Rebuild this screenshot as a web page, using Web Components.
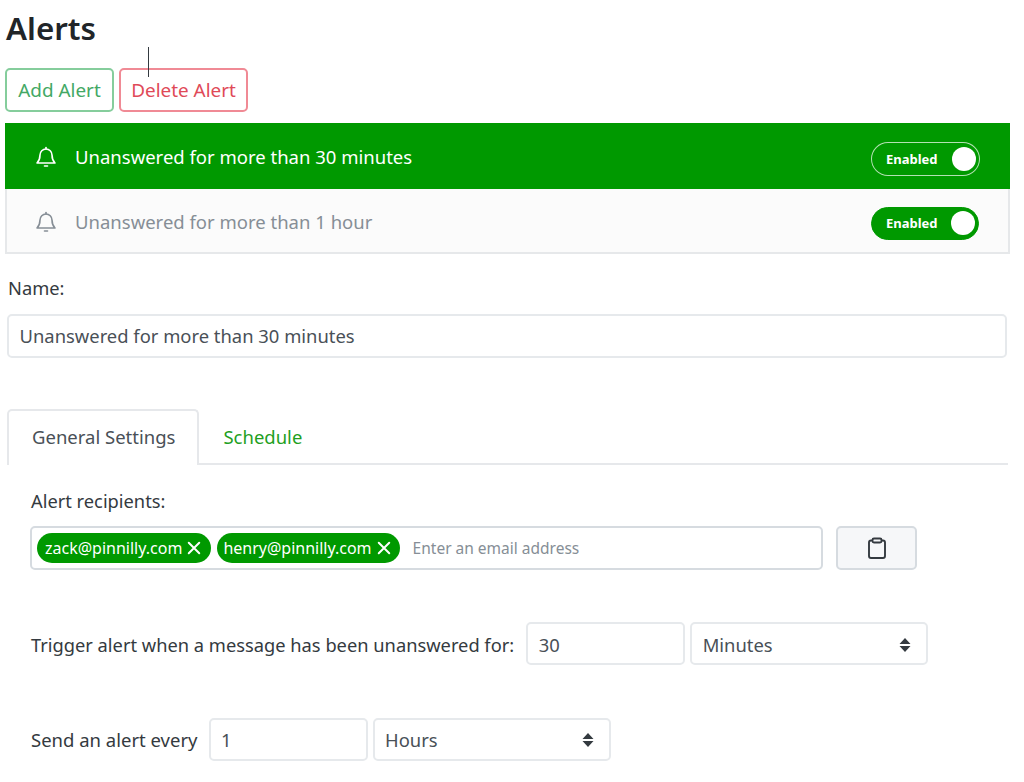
<!DOCTYPE html>
<html lang="en">
<head>
<meta charset="utf-8">
<title>Alerts</title>
<style>
    html, body { margin: 0; background: #fff; }
    body { font-family: 'Noto Sans', 'Open Sans', sans-serif; color: #343a40; overflow: hidden; height: 782px; }
</style>
</head>
<body>
<alerts-page></alerts-page>
<script>
(() => {
    const BELL = `<svg viewBox="0 0 24 24" width="24" height="24" fill="none" stroke="currentColor" stroke-width="1.6" stroke-linecap="round" stroke-linejoin="round">
        <path d="M6 10a6 6 0 0 1 12 0c0 5 1.500 6.500 3 8H3c1.500-1.500 3-3 3-8z"/><path d="M10.500 21h3"/><path d="M12 2.500v1.500"/></svg>`;

    class AlertButton extends HTMLElement {
        constructor() {
            super();
            this.attachShadow({ mode: 'open' }).innerHTML = `
                <style>
                    :host {
                        display: inline-flex;
                        align-items: center;
                        justify-content: center;
                        height: 44px;
                        box-sizing: border-box;
                        border: 2px solid var(--tone);
                        border-radius: 5px;
                        font-size: 18.9px;
                        color: var(--text);
                    }
                </style>
                <slot></slot>`;
        }
    }
    customElements.define('alert-button', AlertButton);

    class AlertToggle extends HTMLElement {
        constructor() {
            super();
            this.attachShadow({ mode: 'open' }).innerHTML = `
                <style>
                    :host {
                        display: flex;
                        align-items: center;
                        justify-content: space-between;
                        box-sizing: border-box;
                        width: 108px;
                        height: 33px;
                        padding: 0 3px 0 14px;
                        border: 1px solid var(--ring, #009900);
                        border-radius: 17px;
                        background: var(--fill, #009900);
                        color: #fff;
                        font-size: 13px;
                        font-weight: 700;
                    }
                    i { width: 24px; height: 24px; border-radius: 50%; background: #fff; }
                </style>
                <slot></slot><i></i>`;
        }
    }
    customElements.define('alert-toggle', AlertToggle);

    class AlertRow extends HTMLElement {
        constructor() {
            super();
            this.attachShadow({ mode: 'open' }).innerHTML = `
                <style>
                    :host {
                        display: flex;
                        align-items: center;
                        box-sizing: border-box;
                        font-size: 18.5px;
                    }
                    :host([active]) { height: 66px; padding: 0 30px 0 29px; background: #009900; color: #fff; }
                    :host(:not([active])) {
                        height: 65px;
                        background: #fbfbfb;
                        color: #868e96;
                        border: solid #e6e8ea;
                        border-width: 0 2px 2px;
                        padding: 0 29px 0 27px;
                    }
                    :host(:not([active])) .label { margin-top: 2px; }
                    .bell { display: flex; margin: 2px 17px 0 0; }
                    .label { flex: 1; }
                    alert-toggle { margin-top: 5px; }
                    :host([active]) alert-toggle { --ring: rgba(255,255,255,.7); width: 109px; height: 34px; }
                </style>
                <span class="bell">${BELL}</span>
                <span class="label"><slot></slot></span>
                <alert-toggle>Enabled</alert-toggle>`;
        }
    }
    customElements.define('alert-row', AlertRow);

    class EmailTag extends HTMLElement {
        constructor() {
            super();
            this.attachShadow({ mode: 'open' }).innerHTML = `
                <style>
                    :host {
                        display: inline-flex;
                        align-items: center;
                        height: 30px;
                        padding: 0 10px 0 8px;
                        border-radius: 15px;
                        background: #009900;
                        color: #fff;
                        font-size: 16px;
                    }
                    svg { margin-left: 5px; }
                </style>
                <slot></slot>
                <svg viewBox="0 0 12 12" width="14" height="14" fill="none" stroke="#fff" stroke-width="1.700" stroke-linecap="round"><path d="M1.500 1.500l9 9M10.500 1.500l-9 9"/></svg>`;
        }
    }
    customElements.define('email-tag', EmailTag);

    class FieldBox extends HTMLElement {
        constructor() {
            super();
            this.attachShadow({ mode: 'open' }).innerHTML = `
                <style>
                    :host {
                        display: flex;
                        align-items: center;
                        box-sizing: border-box;
                        height: 43px;
                        padding: 0 11px 0 10.5px;
                        border: 2px solid #e6e9ec;
                        border-radius: 5px;
                        font-size: 18.4px;
                        color: #495057;
                        background: #fff;
                    }
                    .val { flex: 1; }
                    svg { display: none; }
                    :host([select]) svg { display: block; margin-right: 3px; }
                </style>
                <span class="val"><slot></slot></span>
                <svg viewBox="0 0 14 16" width="14" height="16" fill="#343a40"><path d="M7 1l5.500 6h-11zM7 15l5.500-6h-11z"/></svg>`;
        }
    }
    customElements.define('field-box', FieldBox);

    class AlertsPage extends HTMLElement {
        constructor() {
            super();
            this.attachShadow({ mode: 'open' }).innerHTML = `
                <style>
                    :host { display: block; position: relative; height: 782px; }
                    h1 { margin: 0; padding: 6px 0 0 6px; font-size: 31.3px; line-height: 44px; font-weight: 600; color: #212529; }
                    .cursor { position: absolute; left: 148px; top: 47px; width: 1px; height: 30px; background: #343a40; }
                    .actions { display: flex; gap: 5px; padding: 18px 0 0 5px; }
                    .add { --tone: #85cd9c; --text: #43a865; width: 109px; }
                    .del { --tone: #f08a95; --text: #df4a58; width: 129px; }
                    .list { margin: 11px 14px 0 5px; }
                    .name-label { margin: 22px 0 0 8px; font-size: 18.3px; line-height: 24px; }
                    .name-field { margin: 14px 17px 0 7px; height: 44px; padding-bottom: 2px; }
                    .tabs { display: flex; margin: 51px 16px 0 7px; height: 56px; border-bottom: 2px solid #e6e8eb; box-sizing: border-box; font-size: 18.5px; }
                    .tab { display: flex; align-items: center; padding: 0 24px; }
                    .tab.on { padding: 0 22px 4px 23px; border: 2px solid #e6e8eb; border-bottom: 0; border-radius: 5px 5px 0 0; background: #fff; height: 56px; box-sizing: border-box; color: #495057; }
                    .tab.off { color: #1f9f1f; }
                    .panel { padding: 24px 0 0 31px; font-size: 18.3px; }
                    .label { line-height: 24px; }
                    .recipients { display: flex; gap: 13px; margin: 13px 0 0 -1px; }
                    .tags { display: flex; align-items: center; gap: 6px; box-sizing: border-box; width: 793px; height: 44px; padding: 0 5px; border: 2px solid #d6dbe0; border-radius: 5px; }
                    .tags email-tag + email-tag { padding: 0 9px 0 6px; }
                    .hint { margin-left: 7px; font-size: 15.5px; color: #868e96; }
                    .paste { display: flex; align-items: center; justify-content: center; box-sizing: border-box; width: 81px; height: 44px; background: #f6f7f9; border: 2px solid #d6dbe0; border-radius: 5px; }
                    .rule { display: flex; align-items: center; gap: 5px; }
                    .rule .label { margin-right: 7px; }
                    .first { margin-top: 52px; }
                    .first .label { margin-top: 2px; }
                    .first field-box { padding-top: 2px; }
                    .second { margin-top: 53px; }
                    .second .label { font-size: 18.5px; margin-right: 6px; }
                    .num { width: 159px; }
                    .unit { width: 238px; }
                </style>
                <h1>Alerts</h1>
                <div class="cursor"></div>
                <div class="actions">
                    <alert-button class="add">Add Alert</alert-button>
                    <alert-button class="del">Delete Alert</alert-button>
                </div>
                <div class="list">
                    <alert-row active>Unanswered for more than 30 minutes</alert-row>
                    <alert-row>Unanswered for more than 1 hour</alert-row>
                </div>
                <div class="name-label">Name:</div>
                <field-box class="name-field">Unanswered for more than 30 minutes</field-box>
                <div class="tabs">
                    <div class="tab on">General Settings</div>
                    <div class="tab off">Schedule</div>
                </div>
                <div class="panel">
                    <div class="label">Alert recipients:</div>
                    <div class="recipients">
                        <div class="tags">
                            <email-tag>zack@pinnilly.com</email-tag>
                            <email-tag>henry@pinnilly.com</email-tag>
                            <span class="hint">Enter an email address</span>
                        </div>
                        <div class="paste">
                            <svg viewBox="0 0 20 24" width="20" height="24" fill="none" stroke="#343a40" stroke-width="1.900" stroke-linejoin="round">
                                <path d="M5.500 4.500H4A2 2 0 0 0 2 6.500v13.500a2 2 0 0 0 2 2h12a2 2 0 0 0 2-2V6.500a2 2 0 0 0-2-2h-1.500"/>
                                <rect x="5.500" y="2.500" width="9" height="4" rx="1.500"/>
                            </svg>
                        </div>
                    </div>
                    <div class="rule first">
                        <span class="label">Trigger alert when a message has been unanswered for:</span>
                        <field-box class="num">30</field-box>
                        <field-box class="unit" select>Minutes</field-box>
                    </div>
                    <div class="rule second">
                        <span class="label">Send an alert every</span>
                        <field-box class="num">1</field-box>
                        <field-box class="unit" select>Hours</field-box>
                    </div>
                </div>`;
        }
    }
    customElements.define('alerts-page', AlertsPage);
})();
</script>
</body>
</html>
